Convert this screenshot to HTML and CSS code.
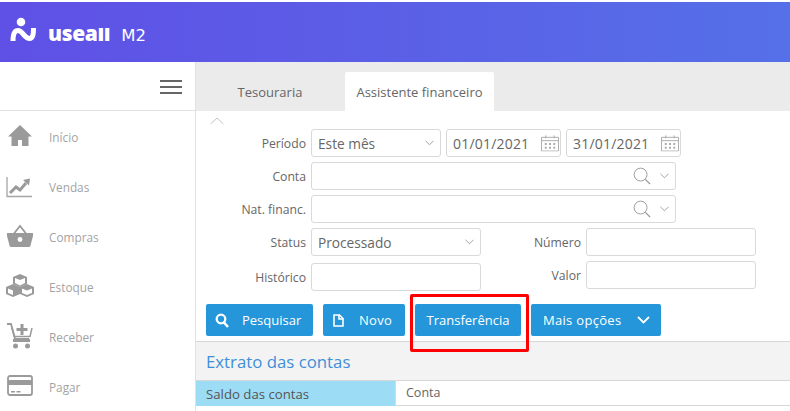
FILE: index.html
```html
<!DOCTYPE html>
<html>
  <head>
    <meta charset="UTF-8">
    <title>Useall M2</title>
    <link rel="stylesheet" href="styles.css">
  </head>
  <body>
    <header class="topbar">
      <svg class="logo-mark" width="28" height="26" viewBox="0 0 28 26">
        <circle cx="11" cy="5" r="4.300" fill="#fff"/>
        <path d="M3 24C3 17 5 13.500 8 13.500C13 13.500 14 21.500 19.500 21.500C23 21.500 23.500 17 23.500 11" fill="none" stroke="#fff" stroke-width="5"/>
      </svg>
      <div class="logo-text">
        <span class="logo-name">usea<span class="logo-ll">ll</span></span>
        <span class="logo-version">M2</span>
      </div>
    </header>

    <div class="app">
      <nav class="sidebar">
        <div class="sidebar-top">
          <div class="hamburger"><span></span><span></span><span></span></div>
        </div>
        <a class="nav-item">
          <svg width="28" height="24" viewBox="0 0 28 24"><path d="M14 1 2 12.500h3.500V22h6.500v-6h4v6h6.500v-9.500H26z" fill="#9a9a9a"/></svg>
          Início
        </a>
        <a class="nav-item">
          <svg width="28" height="24" viewBox="0 0 28 24"><path d="M1 3v19.500h25" fill="none" stroke="#a5a5a5" stroke-width="1.300"/><path d="m4 19 6-6 4 3 6-7" fill="none" stroke="#9a9a9a" stroke-width="3"/><path d="m17 6 7-1.500-1 7z" fill="#9a9a9a"/></svg>
          Vendas
        </a>
        <a class="nav-item">
          <svg width="28" height="24" viewBox="0 0 28 24"><path d="M8 9.500 14 2l6 7.500" fill="none" stroke="#9a9a9a" stroke-width="1.800"/><path d="M1 9h26v3l-2.500 9.500q-.3 1.500-2 1.500H5.500q-1.700 0-2-1.500L1 12z" fill="#9a9a9a"/><circle cx="14" cy="15.500" r="2.400" fill="#fff"/></svg>
          Compras
        </a>
        <a class="nav-item">
          <svg width="28" height="24" viewBox="0 0 28 24"><path d="m14 0 7 3v7l-7 3-7-3V3z" fill="#9a9a9a"/><path d="m7 10 7 3v7l-7 3-7-3v-7z" fill="#9a9a9a"/><path d="m21 10 7 3v7l-7 3-7-3v-7z" fill="#9a9a9a"/><path d="m9 4 5 2 5-2v5l-5 2.500L9 9zM2 14.500l5 2v4.500l-5-2zM16 14.500l5 2 5-2v4.500l-5 2-5-2z" fill="#fff"/></svg>
          Estoque
        </a>
        <a class="nav-item">
          <svg width="28" height="26" viewBox="0 0 28 26"><path d="M1 1h4l4 15h14" fill="none" stroke="#9a9a9a" stroke-width="1.800"/><path d="M7 16h17v3H7z" fill="#9a9a9a"/><path d="M6 5 8.500 13.500H24L26 5" fill="none" stroke="#9a9a9a" stroke-width="1.500"/><path d="M14.500 1h3v4h4v3h-4v4h-3V8h-4V5h4z" fill="#9a9a9a"/><circle cx="9.500" cy="23" r="2.500" fill="#9a9a9a"/><circle cx="21.500" cy="23" r="2.500" fill="#9a9a9a"/></svg>
          Receber
        </a>
        <a class="nav-item">
          <svg width="28" height="24" viewBox="0 0 28 24"><rect x="2" y="2" width="24" height="19" rx="2" fill="none" stroke="#9a9a9a" stroke-width="1.800"/><path d="M2 6h24v5H2z" fill="#9a9a9a"/><path d="M5 17h4v1.500H5zM10.500 17h4v1.500h-4z" fill="#9a9a9a"/></svg>
          Pagar
        </a>
      </nav>

      <main class="content">
        <div class="tabs">
          <span class="tab tab-plain">Tesouraria</span>
          <span class="tab tab-active">Assistente financeiro</span>
        </div>

        <div class="collapse-arrow"><svg width="14" height="8" viewBox="0 0 14 8"><path d="M.5 7 7 1l6.500 6" fill="none" stroke="#c4c4c4"/></svg></div>

        <form class="filters">
          <div class="row">
            <label>Período</label>
            <div class="field w130">Este mês<svg class="chev" width="9" height="6" viewBox="0 0 10 6"><path d="m.5.500 4.500 4.500L9.500.500" fill="none" stroke="#999"/></svg></div>
            <div class="field date">01/01/2021<svg class="cal" width="18" height="18" viewBox="0 0 19 18"><use href="#cal"/></svg></div>
            <div class="field date">31/01/2021<svg class="cal" width="18" height="18" viewBox="0 0 19 18"><use href="#cal"/></svg></div>
          </div>
          <div class="row">
            <label>Conta</label>
            <div class="field w365"><svg class="lupa" width="18" height="18" viewBox="0 0 19 19"><use href="#lupa"/></svg><svg class="chev" width="9" height="6" viewBox="0 0 10 6"><path d="m.5.500 4.500 4.500L9.500.500" fill="none" stroke="#999"/></svg></div>
          </div>
          <div class="row">
            <label>Nat. financ.</label>
            <div class="field w365"><svg class="lupa" width="18" height="18" viewBox="0 0 19 19"><use href="#lupa"/></svg><svg class="chev" width="9" height="6" viewBox="0 0 10 6"><path d="m.5.500 4.500 4.500L9.500.500" fill="none" stroke="#999"/></svg></div>
          </div>
          <div class="two-cols">
            <div class="col">
              <div class="row">
                <label>Status</label>
                <div class="field w170">Processado<svg class="chev" width="9" height="6" viewBox="0 0 10 6"><path d="m.5.500 4.500 4.500L9.500.500" fill="none" stroke="#999"/></svg></div>
              </div>
              <div class="row">
                <label>Histórico</label>
                <div class="field w170"></div>
              </div>
            </div>
            <div class="col col-right">
              <div class="row">
                <label class="short">Número</label>
                <div class="field w170"></div>
              </div>
              <div class="row">
                <label class="short">Valor</label>
                <div class="field w170"></div>
              </div>
            </div>
          </div>
        </form>

        <div class="actions">
          <button class="btn btn-search"><svg width="14" height="15" viewBox="0 0 14 15"><circle cx="6" cy="6" r="4.300" fill="none" stroke="#fff" stroke-width="2.300"/><path d="m9 9.500 4 4.500" stroke="#fff" stroke-width="2.600"/></svg>Pesquisar</button>
          <button class="btn btn-new"><svg width="11" height="13" viewBox="0 0 11 13"><path d="M1 1h5.500L10 4.500V12H1z" fill="none" stroke="#fff" stroke-width="1.600"/><path d="M6 1v4h4" fill="none" stroke="#fff" stroke-width="1.600"/></svg>Novo</button>
          <button class="btn btn-transfer">Transferência</button>
          <button class="btn btn-more">Mais opções<svg width="13" height="8" viewBox="0 0 13 8"><path d="m1 1 5.500 5.500L12 1" fill="none" stroke="#fff" stroke-width="1.800"/></svg></button>
          <div class="highlight"></div>
        </div>

        <section class="extract">
          <h2>Extrato das contas</h2>
          <div class="extract-table">
            <div class="cell-balance">Saldo das contas</div>
            <div class="cell-account">Conta</div>
          </div>
        </section>
      </main>
    </div>

    <svg class="defs" width="0" height="0">
      <symbol id="cal" viewBox="0 0 19 18">
        <path d="M.5 3h18v14.500H.5zM.5 6.500h18M5 1v3M14 1v3" fill="none" stroke="#a9a9a9"/>
        <path d="M4 9h2v2H4zM8.500 9h2v2h-2zM13 9h2v2h-2zM4 13h2v2H4zM8.500 13h2v2h-2zM13 13h2v2h-2z" fill="#a9a9a9"/>
      </symbol>
      <symbol id="lupa" viewBox="0 0 19 19">
        <circle cx="8" cy="8" r="6.800" fill="none" stroke="#999"/>
        <path d="m13 13 5 5" stroke="#999" stroke-width="1.300"/>
      </symbol>
    </svg>
  </body>
</html>
```

FILE: styles.css
```css
* {
  box-sizing: border-box;
}

html, body {
  height: 100%;
}

body {
  margin: 0;
  height: 411px;
  overflow: hidden;
  background-color: #FFFFFF;
  font-family: "Open Sans", Arial, sans-serif;
  font-size: 14px;
  color: #666666;
}

.defs {
  position: absolute;
}

.topbar {
  display: flex;
  align-items: center;
  height: 60px;
  margin-top: 2px;
  padding-left: 10px;
  background: linear-gradient(90deg, #5F50E6 0%, #5C5CE6 40%, #5570E8 100%);
  color: #FFFFFF;
}

.logo-mark {
  margin-right: 10px;
  margin-bottom: 4px;
}

.logo-text {
  display: flex;
  align-items: baseline;
  margin-top: 4px;
}

.logo-name {
  font-family: "Open Sans", sans-serif;
  font-weight: 800;
  font-size: 21px;
  letter-spacing: -0.4px;
  line-height: 1;
  margin-right: 11px;
}

.logo-ll {
  display: inline-block;
  transform: scaleY(0.8);
  transform-origin: 50% 80%;
}

.logo-version {
  font-family: "DejaVu Sans", sans-serif;
  font-size: 16.500px;
  font-weight: 400;
}

.app {
  display: flex;
  height: 349px;
}

.sidebar {
  flex: 0 0 196px;
  border-right: 1px solid #E1E1E1;
}

.sidebar-top {
  display: flex;
  justify-content: flex-end;
  align-items: center;
  height: 49px;
  padding: 1px 13px 0 0;
  border-bottom: 1px solid #E1E1E1;
}

.hamburger span {
  display: block;
  width: 22px;
  height: 2px;
  margin: 4px 0;
  background-color: #666666;
}

.nav-item {
  display: flex;
  align-items: center;
  gap: 15px;
  height: 50px;
  padding: 1px 0 0 6px;
  font-size: 11.800px;
  color: #A3A3A3;
}

.nav-item svg {
  margin-bottom: 1px;
}

.content {
  flex: 1;
  min-width: 0;
  position: relative;
}

.tabs {
  display: flex;
  align-items: flex-end;
  height: 49px;
  padding-left: 22px;
  background-color: #EBEBEB;
}

.tab {
  display: flex;
  align-items: center;
  justify-content: center;
  height: 39px;
  font-size: 13px;
  color: #666666;
}

.tab-plain {
  width: 127px;
  padding-right: 23px;
}

.tab-active {
  width: 149px;
  background-color: #FFFFFF;
  border-radius: 2px 2px 0 0;
}

.collapse-arrow {
  height: 18px;
  padding: 6px 0 0 14px;
  line-height: 0;
}

.filters {
  display: flex;
  flex-direction: column;
  gap: 5px;
}

.row {
  display: flex;
  align-items: center;
  gap: 5px;
}

.row label {
  width: 110px;
  text-align: right;
  font-size: 12.200px;
  color: #666666;
}

.row label.short {
  width: auto;
}

.field {
  display: flex;
  align-items: center;
  height: 28px;
  padding-left: 6px;
  background-color: #FFFFFF;
  border: 1px solid #D9D9D9;
  border-radius: 3px;
  font-size: 13.700px;
  color: #666666;
}

.w130 { width: 130px; }
.w170 { width: 170px; }
.w365 { width: 365px; }

.date {
  width: 115px;
  font-size: 14px;
  letter-spacing: 0.2px;
}

.chev {
  margin-left: auto;
  margin-right: 6px;
}

.cal {
  margin-left: auto;
  margin-right: 1px;
}

.lupa {
  margin-left: auto;
  margin-right: 9px;
}

.lupa + .chev {
  margin-left: 0;
}

.two-cols {
  display: flex;
}

.col {
  display: flex;
  flex-direction: column;
  gap: 7px;
}

.col-right {
  flex: 0 0 275px;
  align-items: flex-end;
  gap: 5px;
}

.actions {
  display: flex;
  gap: 10px;
  padding: 13px 0 0 10px;
  position: relative;
}

.btn {
  display: flex;
  align-items: center;
  height: 32px;
  border: none;
  border-radius: 2px;
  background-color: #2596DA;
  color: #FFFFFF;
  font-family: inherit;
  font-size: 13px;
  padding: 0;
}

.btn-search {
  width: 107px;
  padding-left: 9px;
  gap: 13px;
}

.btn-new {
  width: 82px;
  padding-left: 10px;
  gap: 15px;
  letter-spacing: 0.3px;
}

.btn-transfer {
  width: 106px;
  justify-content: center;
}

.btn-more {
  width: 130px;
  padding-left: 12px;
  gap: 16px;
  letter-spacing: 0.3px;
}

.highlight {
  position: absolute;
  left: 214px;
  top: 3px;
  width: 119px;
  height: 58px;
  border: 3px solid #FF0000;
  border-radius: 2px;
  pointer-events: none;
}

.extract {
  margin-top: 5px;
  border-top: 1px solid #D6D6D6;
  background-color: #F3F3F3;
}

.extract h2 {
  margin: 0;
  height: 39px;
  padding-left: 10px;
  font-size: 16.800px;
  font-weight: 400;
  line-height: 39px;
  color: #3E8FD8;
  border-bottom: 1px solid #D6D6D6;
}

.extract-table {
  display: flex;
  height: 30px;
  background-color: #FFFFFF;
}

.cell-balance {
  width: 199px;
  height: 25px;
  padding-left: 10px;
  font-size: 13.200px;
  line-height: 26px;
  background-color: #9CDCF5;
  color: #555555;
}

.cell-account {
  flex: 1;
  height: 25px;
  padding-left: 10px;
  font-size: 12.500px;
  line-height: 24px;
  border-left: 1px solid #D9D9D9;
  border-bottom: 1px solid #D6D6D6;
}
```
